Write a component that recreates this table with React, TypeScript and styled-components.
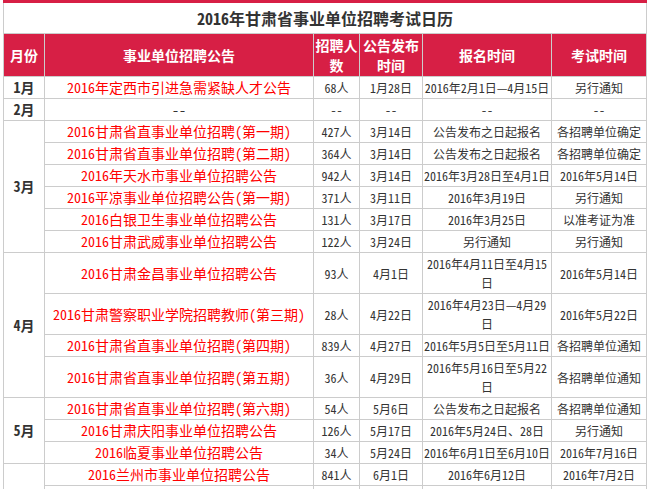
import React from "react";
import styled, { createGlobalStyle } from "styled-components";

type Row = {
  month?: { label: string; span: number };
  title: string;
  count: string;
  pub: string;
  signup: string[];
  exam: string;
};

const rows: Row[] = [
  { month: { label: "1月", span: 1 }, title: "2016年定西市引进急需紧缺人才公告", count: "68人", pub: "1月28日", signup: ["2016年2月1日—4月15日"], exam: "另行通知" },
  { month: { label: "2月", span: 1 }, title: "--", count: "--", pub: "--", signup: ["--"], exam: "--" },
  { month: { label: "3月", span: 6 }, title: "2016甘肃省直事业单位招聘（第一期）", count: "427人", pub: "3月14日", signup: ["公告发布之日起报名"], exam: "各招聘单位确定" },
  { title: "2016甘肃省直事业单位招聘（第二期）", count: "364人", pub: "3月14日", signup: ["公告发布之日起报名"], exam: "各招聘单位确定" },
  { title: "2016年天水市事业单位招聘公告", count: "942人", pub: "3月14日", signup: ["2016年3月28日至4月1日"], exam: "2016年5月14日" },
  { title: "2016平凉事业单位招聘公告(第一期)", count: "371人", pub: "3月11日", signup: ["2016年3月19日"], exam: "另行通知" },
  { title: "2016白银卫生事业单位招聘公告", count: "131人", pub: "3月17日", signup: ["2016年3月25日"], exam: "以准考证为准" },
  { title: "2016甘肃武威事业单位招聘公告", count: "122人", pub: "3月24日", signup: ["另行通知"], exam: "另行通知" },
  { month: { label: "4月", span: 4 }, title: "2016甘肃金昌事业单位招聘公告", count: "93人", pub: "4月1日", signup: ["2016年4月11日至4月15", "日"], exam: "2016年5月14日" },
  { title: "2016甘肃警察职业学院招聘教师（第三期）", count: "28人", pub: "4月22日", signup: ["2016年4月23日—4月29", "日"], exam: "2016年5月22日" },
  { title: "2016甘肃省直事业单位招聘（第四期）", count: "839人", pub: "4月27日", signup: ["2016年5月5日至5月11日"], exam: "各招聘单位通知" },
  { title: "2016甘肃省直事业单位招聘（第五期）", count: "36人", pub: "4月29日", signup: ["2016年5月16日至5月22", "日"], exam: "各招聘单位通知" },
  { month: { label: "5月", span: 3 }, title: "2016甘肃省直事业单位招聘（第六期）", count: "54人", pub: "5月6日", signup: ["公告发布之日起报名"], exam: "各招聘单位通知" },
  { title: "2016甘肃庆阳事业单位招聘公告", count: "126人", pub: "5月17日", signup: ["2016年5月24日、28日"], exam: "另行通知" },
  { title: "2016临夏事业单位招聘公告", count: "34人", pub: "5月24日", signup: ["2016年6月1日至6月10日"], exam: "2016年7月16日" },
  { month: { label: "", span: 2 }, title: "2016兰州市事业单位招聘公告", count: "841人", pub: "6月1日", signup: ["2016年6月12日"], exam: "2016年7月2日" },
  { title: "", count: "", pub: "", signup: [""], exam: "" },
];

const GlobalStyle = createGlobalStyle`
  html, body {
    margin: 0;
    padding: 0;
    background: #fff;
  }
  body {
    font-family: "Noto Sans CJK SC", "Liberation Sans", sans-serif;
    font-feature-settings: "hwid" 1;
    text-spacing-trim: space-all;
  }
`;

const Page = styled.div`
  padding-left: 3px;
  width: 643px;
`;

const Calendar = styled.table`
  width: 643px;
  table-layout: fixed;
  border-collapse: collapse;
  border: 1px solid #ccc;
  border-top: 0;
  color: #333;
`;

const TitleCell = styled.th`
  height: 30px;
  padding: 0;
  border-top: 3px solid #d71f45;
  border-bottom: 1px solid #ccc;
  font-size: 16px;
  font-weight: bold;
  line-height: 30px;
  color: #333;
  text-align: center;
`;

const HeadCell = styled.th`
  background: #d71f45;
  color: #fff;
  font-size: 14px;
  font-weight: bold;
  line-height: 20px;
  padding: 1px 0;
  border: 1px solid #ccc;
  text-align: center;
  vertical-align: middle;
`;

const Cell = styled.td<{ $red?: boolean; $big?: boolean; $bold?: boolean }>`
  border: 1px solid #ccc;
  padding: 1px 0;
  height: 19px;
  font-size: ${(p) => (p.$big ? "14px" : "12px")};
  font-weight: ${(p) => (p.$bold ? "bold" : "normal")};
  line-height: 19px;
  color: ${(p) => (p.$red ? "#f00" : "#333")};
  text-align: center;
  vertical-align: middle;
  white-space: nowrap;
`;

export default function App() {
  return (
    <Page>
      <GlobalStyle />
      <Calendar>
        <colgroup>
          <col style={{ width: 41 }} />
          <col style={{ width: 269 }} />
          <col style={{ width: 46 }} />
          <col style={{ width: 63 }} />
          <col style={{ width: 129 }} />
          <col style={{ width: 95 }} />
        </colgroup>
        <thead>
          <tr>
            <TitleCell colSpan={6}>2016年甘肃省事业单位招聘考试日历</TitleCell>
          </tr>
          <tr>
            <HeadCell>月份</HeadCell>
            <HeadCell>事业单位招聘公告</HeadCell>
            <HeadCell>
              招聘人
              <br />数
            </HeadCell>
            <HeadCell>
              公告发布
              <br />
              时间
            </HeadCell>
            <HeadCell>报名时间</HeadCell>
            <HeadCell>考试时间</HeadCell>
          </tr>
        </thead>
        <tbody>
          {rows.map((r, i) => (
            <tr key={i}>
              {r.month && (
                <Cell rowSpan={r.month.span} $big $bold>
                  {r.month.label}
                </Cell>
              )}
              <Cell $big $red={r.title !== "--"}>
                {r.title}
              </Cell>
              <Cell>{r.count}</Cell>
              <Cell>{r.pub}</Cell>
              <Cell>
                {r.signup.map((line, j) => (
                  <React.Fragment key={j}>
                    {j > 0 && <br />}
                    {line}
                  </React.Fragment>
                ))}
              </Cell>
              <Cell>{r.exam}</Cell>
            </tr>
          ))}
        </tbody>
      </Calendar>
    </Page>
  );
}
